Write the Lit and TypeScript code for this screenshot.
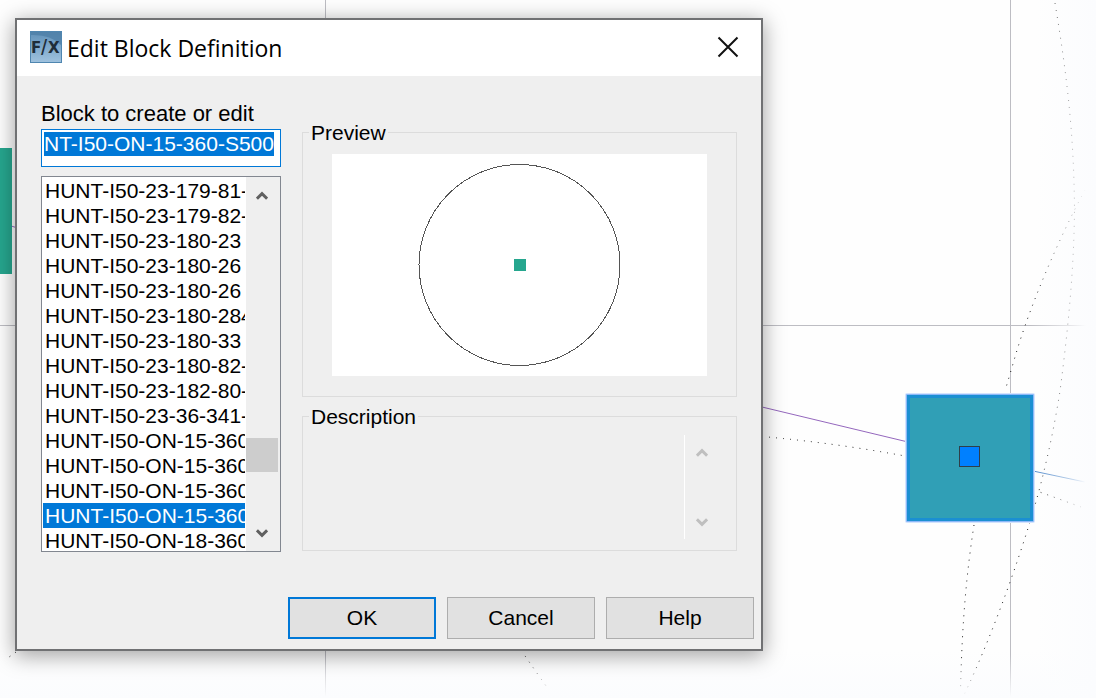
import { LitElement, html, svg, css } from "lit";
import { customElement, query } from "lit/decorators.js";

const BLOCKS = [
  "HUNT-I50-23-179-81-",
  "HUNT-I50-23-179-82-",
  "HUNT-I50-23-180-23",
  "HUNT-I50-23-180-26",
  "HUNT-I50-23-180-26",
  "HUNT-I50-23-180-284",
  "HUNT-I50-23-180-33",
  "HUNT-I50-23-180-82-",
  "HUNT-I50-23-182-80-",
  "HUNT-I50-23-36-341-",
  "HUNT-I50-ON-15-360",
  "HUNT-I50-ON-15-360",
  "HUNT-I50-ON-15-360",
  "HUNT-I50-ON-15-360",
  "HUNT-I50-ON-18-360",
];
const SELECTED = 13;

const chevron = (up: boolean) => html`<svg class="chevron" width="12" height="10" viewBox="0 0 12 10" aria-hidden="true">
  ${up
    ? svg`<path d="M0.9 7.6 L6 2.6 L11.1 7.6" />`
    : svg`<path d="M0.9 2.4 L6 7.4 L11.1 2.4" />`}
</svg>`;

@customElement("drawing-canvas")
class DrawingCanvas extends LitElement {
  static styles = css`
    :host {
      display: block;
      background:
        linear-gradient(to right, transparent calc(100% - 60px), #fbfcfe),
        linear-gradient(to bottom, transparent calc(100% - 48px), #fbfcfe),
        #fefefe;
    }
    .scene { display: block; width: 100%; height: 100%; }
    .grid { stroke: #bdbdc3; stroke-width: 1; }
    .dots { fill: none; stroke: #1c1c1c; stroke-width: 1; stroke-dasharray: 1 6; }
    .purple { stroke: #9467bd; stroke-width: 1; }
    .blue { stroke: #4682c8; stroke-width: 1; }
    .block { fill: #26a68e; }
    .halo { fill: #d3e3fd; }
    .glow { fill: #8db8f8; }
    .edge { fill: #1b8fd2; }
    .face { fill: #309fb6; }
    .grip { fill: #0080ff; stroke: #2f3f4a; stroke-width: 1; }
  `;

  render() {
    return html`<svg class="scene" aria-hidden="true">
      <defs>
        <linearGradient id="fx" gradientUnits="userSpaceOnUse" x1="1030" y1="0" x2="1086" y2="0">
          <stop offset="0" stop-color="#fff" />
          <stop offset="0.75" stop-color="#555" />
          <stop offset="1" stop-color="#000" />
        </linearGradient>
        <linearGradient id="fy" gradientUnits="userSpaceOnUse" x1="0" y1="655" x2="0" y2="697">
          <stop offset="0" stop-color="#000" stop-opacity="0" />
          <stop offset="1" stop-color="#000" />
        </linearGradient>
        <mask id="fade" maskUnits="userSpaceOnUse" x="0" y="0" width="100%" height="100%">
          <rect width="100%" height="100%" fill="url(#fx)" />
          <rect width="100%" height="100%" fill="url(#fy)" />
        </mask>
      </defs>
      <g mask="url(#fade)">
        <path class="grid" d="M325.5 0V698M1010.5 0V698M0 325.5H1096" />
        <path class="dots" d="M1055 3C1066 70 1074 130 1074.5 210C1074 270 1068 330 1060 391C1054 430 1044 475 1033 512C1015 572 990 640 964 695" />
        <path class="dots" d="M1085 190C1060 236 1030 305 1015 357L1005 391M974 525C967 570 962 620 960.5 692" />
        <path class="dots" d="M762 436.5Q835 443 905 456M1034 490L1048 495L1081 507" />
        <path class="dots" d="M16 652L5 660M521 650Q536 672 549 690M15 249.5h1" />
        <path class="purple" d="M762 407L908 442M8 225L16 227.500" />
        <path class="blue" d="M1033 471L1085 482" />
      </g>
      <rect class="block" x="-114" y="148" width="126" height="126" />
      <rect class="halo" x="905" y="393" width="130" height="130" rx="2" />
      <rect class="glow" x="906" y="394" width="128" height="128" rx="1" />
      <rect class="edge" x="907" y="395" width="126" height="126" />
      <rect class="face" x="910" y="398" width="120" height="120" />
      <rect class="grip" x="959.5" y="446.5" width="20" height="20" />
    </svg>`;
  }
}

@customElement("app-root")
class AppRoot extends LitElement {
  @query(".name") nameBox!: HTMLInputElement;

  static styles = css`
    :host {
      display: block;
      position: relative;
      box-sizing: border-box;
      min-height: 100vh;
      padding: 18px 15px;
      overflow: hidden;
      font: 21px/26px "Liberation Sans", Arial, sans-serif;
      color: #000;
    }
    * { box-sizing: border-box; }
    button, input, select, textarea { font: inherit; color: inherit; margin: 0; border-radius: 0; outline: none; }
    .canvas { position: absolute; inset: 0; }
    .dialog {
      position: relative;
      max-width: 748px;
      border: 2px solid #707173;
      background: #efefef;
      box-shadow: 0 4px 20px 1px rgba(0, 0, 0, 0.36);
    }
    .titlebar { display: flex; align-items: center; height: 56px; padding: 0 20px 2px 13px; background: #fff; }
    .title { flex: 1; margin: 0; padding: 2px 0 0 5px; font: 400 23px/30px "Open Sans", "Noto Sans", sans-serif; }
    .logo text { font: 700 15px "DejaVu Sans", sans-serif; fill: #1f2d38; }
    .logo .slash { font: 400 22px "Liberation Sans", sans-serif; }
    .close { display: flex; padding: 2px; border: 0; background: none; }
    .close path { fill: none; stroke: #111; stroke-width: 2; }
    .body { display: grid; grid-template-columns: 240px minmax(0, 1fr); gap: 21px; padding: 25px 24px 0; }
    .left { display: flex; flex-direction: column; }
    .label { padding-bottom: 2px; font-size: 22px; }
    .name {
      width: 100%;
      height: 38px;
      margin-bottom: 9px;
      padding: 0 2px 8px;
      border: 1px solid #0078d7;
      background: #fff;
      caret-color: transparent;
    }
    .name::selection { background: #0078d7; color: #fff; }
    .listbox { display: flex; height: 376px; border: 1px solid #828790; background: #fff; overflow: hidden; }
    .list {
      flex: 1;
      min-width: 0;
      height: 376px;
      padding: 1px 0 0 1px;
      border: 0;
      background: #fff;
      overflow: hidden;
      scrollbar-width: none;
    }
    .list option { height: 25px; min-height: 25px; padding: 1px 0 0 2px; line-height: 25px; overflow: hidden; }
    .list option:checked { background: #0078d7 linear-gradient(#0078d7, #0078d7); color: #fff; }
    .scroll { display: flex; flex-direction: column; align-items: center; width: 34px; background: #efefef; }
    .listbar { padding: 14px 2px 13px 0; margin-left: 1px; }
    .arrow { display: flex; padding: 0; border: 0; background: none; }
    .chevron path { fill: none; stroke: #606060; stroke-width: 3; }
    .arrow:disabled .chevron path { stroke: #bfbfbf; }
    .track { flex: 1; width: 100%; display: flex; flex-direction: column; }
    .before { flex: 237; }
    .thumb { height: 34px; background: #cdcdcd; }
    .after { flex: 56; }
    .right { display: flex; flex-direction: column; padding-top: 18px; }
    .group { min-width: 0; margin: 0; padding: 0 29px; border: 1px solid #dcdcdc; }
    .group legend { margin-left: -23px; padding: 2px 2px 0; line-height: 24px; }
    .preview { padding-bottom: 20px; margin-bottom: 6px; }
    .drawing { display: block; width: 100%; height: 222px; margin-top: 9px; background: #fff; }
    .drawing circle { fill: none; stroke: #555; stroke-width: 1; shape-rendering: crispEdges; }
    .drawing rect { fill: #26a68e; }
    .desc { padding: 0 17px 11px 29px; }
    .descrow { display: flex; height: 104px; margin-top: 6px; }
    .desctext { flex: 1; min-width: 0; height: 104px; padding: 0; border: 0; border-right: 1px solid #fff; background: transparent; resize: none; overflow: hidden; }
    .descbar { padding: 13px 0 12px; justify-content: space-between; }
    .footer { display: flex; justify-content: flex-end; gap: 11px; padding: 45px 7px 10px; }
    .button { width: 148px; height: 42px; padding: 0; border: 1px solid #adadad; background: #e1e1e1; }
    .default { border: 2px solid #0078d7; }
  `;

  firstUpdated() {
    this.nameBox.focus();
    this.nameBox.select();
  }

  render() {
    return html`
      <drawing-canvas class="canvas"></drawing-canvas>
      <section class="dialog" role="dialog" aria-labelledby="title">
        <header class="titlebar">
          <svg class="logo" width="32" height="32" viewBox="0 0 32 32" aria-hidden="true">
            <defs>
              <linearGradient id="icon" x1="0" y1="0" x2="0" y2="1">
                <stop offset="0" stop-color="#5f90b8" />
                <stop offset="1" stop-color="#9fc2de" />
              </linearGradient>
            </defs>
            <rect x="0.5" y="0.5" width="31" height="31" fill="url(#icon)" stroke="#4f86b0" />
            <path d="M1 1H31V14Q20 3 1 4Z" fill="#4c7ea6" opacity="0.75" />
            <text x="1" y="22">F</text>
            <text class="slash" x="11" y="24">/</text>
            <text x="18" y="22">X</text>
          </svg>
          <h1 class="title" id="title">Edit Block Definition</h1>
          <button class="close" aria-label="Close">
            <svg width="22" height="22" viewBox="0 0 22 22"><path d="M1.500 1.500L20.500 20.500M20.500 1.500L1.500 20.500" /></svg>
          </button>
        </header>
        <div class="body">
          <div class="left">
            <label class="label" for="name">Block to create or edit</label>
            <input class="name" id="name" type="text" spellcheck="false" value="NT-I50-ON-15-360-S500" />
            <div class="listbox">
              <select class="list" size="15" aria-label="Block to create or edit">
                ${BLOCKS.map((b, i) => html`<option value=${i} ?selected=${i === SELECTED}>${b}</option>`)}
              </select>
              <div class="scroll listbar">
                <button class="arrow" aria-label="Scroll up">${chevron(true)}</button>
                <div class="track"><div class="before"></div><div class="thumb"></div><div class="after"></div></div>
                <button class="arrow" aria-label="Scroll down">${chevron(false)}</button>
              </div>
            </div>
          </div>
          <div class="right">
            <fieldset class="group preview">
              <legend>Preview</legend>
              <svg class="drawing" viewBox="0 0 375 222" aria-hidden="true">
                <circle cx="187.500" cy="111" r="100.500" />
                <rect x="182" y="105" width="12" height="12" />
              </svg>
            </fieldset>
            <fieldset class="group desc">
              <legend>Description</legend>
              <div class="descrow">
                <textarea class="desctext" aria-label="Description" readonly></textarea>
                <div class="scroll">
                  <div class="scroll track descbar">
                    <button class="arrow" aria-label="Scroll up" disabled>${chevron(true)}</button>
                    <button class="arrow" aria-label="Scroll down" disabled>${chevron(false)}</button>
                  </div>
                </div>
              </div>
            </fieldset>
          </div>
        </div>
        <footer class="footer">
          <button class="button default">OK</button>
          <button class="button">Cancel</button>
          <button class="button">Help</button>
        </footer>
      </section>
    `;
  }
}
